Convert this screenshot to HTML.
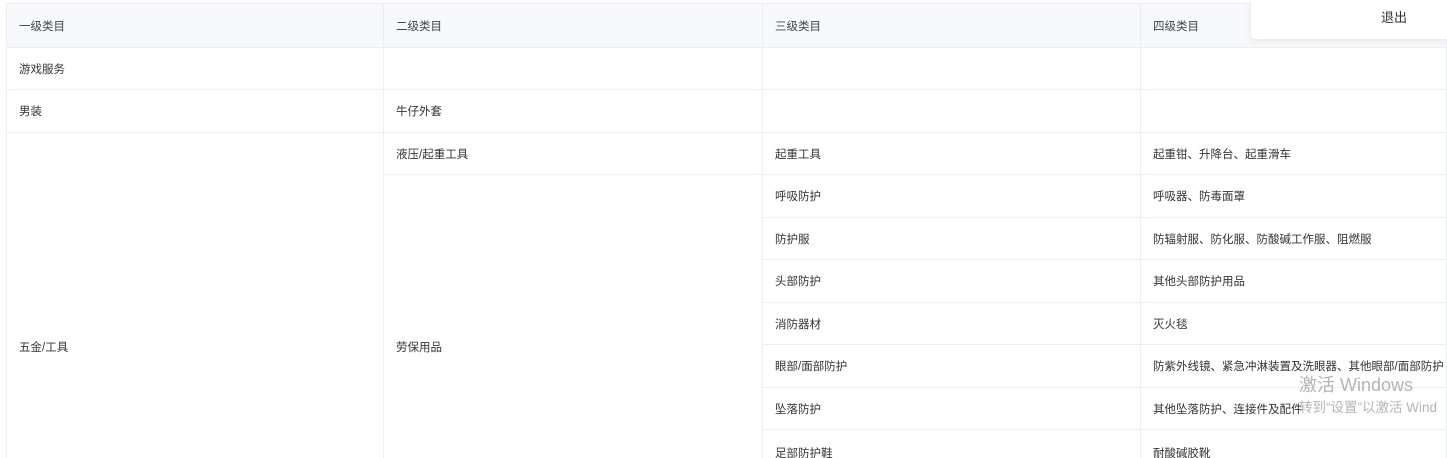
<!DOCTYPE html>
<html style="width:1447px;height:458px;overflow:hidden"><head><meta charset="utf-8"><style>
*{margin:0;padding:0;box-sizing:border-box}
body{width:1447px;height:458px;overflow:hidden;background:#fff;position:relative;font-family:"Liberation Sans","Noto Sans CJK SC",sans-serif;font-size:11.5px;color:#333}
.c{position:absolute;display:flex;align-items:center;padding-left:12px;border-right:1px solid #ebeef5;border-bottom:1px solid #ebeef5;white-space:nowrap;overflow:hidden}
.h{background:#f8f9fb;color:#444}
.pop{position:absolute;left:1251px;top:0;width:196px;height:39px;background:#fff;border-radius:0 0 0 4px;box-shadow:0 2px 8px rgba(0,0,0,.08)}
.pop span{position:absolute;left:130px;top:7px;font-size:13px;color:#333}
.wm1{position:absolute;left:1299px;top:371px;font-size:18px;color:#b5b5b5}
.wm2{position:absolute;left:1299px;top:396px;font-size:13.5px;color:#b5b5b5;white-space:nowrap}
</style></head><body>
<div style="position:absolute;left:0;top:0;width:1447px;height:458px;overflow:hidden">
<div style="position:absolute;left:6px;top:3px;width:1441px;height:1px;background:#ebeef5"></div>
<div style="position:absolute;left:6px;top:3px;width:1px;height:455px;background:#ebeef5"></div>
<div class="c h" style="left:7px;top:4px;width:377px;height:44px">一级类目</div>
<div class="c h" style="left:384px;top:4px;width:379px;height:44px">二级类目</div>
<div class="c h" style="left:763px;top:4px;width:378px;height:44px">三级类目</div>
<div class="c h" style="left:1141px;top:4px;width:306px;height:44px">四级类目</div>
<div class="c" style="left:7px;top:48px;width:377px;height:42px">游戏服务</div>
<div class="c" style="left:384px;top:48px;width:379px;height:42px"></div>
<div class="c" style="left:763px;top:48px;width:378px;height:42px"></div>
<div class="c" style="left:1141px;top:48px;width:306px;height:42px"></div>
<div class="c" style="left:7px;top:90px;width:377px;height:43px">男装</div>
<div class="c" style="left:384px;top:90px;width:379px;height:43px">牛仔外套</div>
<div class="c" style="left:763px;top:90px;width:378px;height:43px"></div>
<div class="c" style="left:1141px;top:90px;width:306px;height:43px"></div>
<div class="c" style="left:7px;top:133px;width:377px;height:428px">五金/工具</div>
<div class="c" style="left:384px;top:133px;width:379px;height:42px">液压/起重工具</div>
<div class="c" style="left:384px;top:175px;width:379px;height:344px">劳保用品</div>
<div class="c" style="left:763px;top:133px;width:378px;height:42px">起重工具</div>
<div class="c" style="left:1141px;top:133px;width:306px;height:42px">起重钳、升降台、起重滑车</div>
<div class="c" style="left:763px;top:175px;width:378px;height:43px">呼吸防护</div>
<div class="c" style="left:1141px;top:175px;width:306px;height:43px">呼吸器、防毒面罩</div>
<div class="c" style="left:763px;top:218px;width:378px;height:42px">防护服</div>
<div class="c" style="left:1141px;top:218px;width:306px;height:42px">防辐射服、防化服、防酸碱工作服、阻燃服</div>
<div class="c" style="left:763px;top:260px;width:378px;height:43px">头部防护</div>
<div class="c" style="left:1141px;top:260px;width:306px;height:43px">其他头部防护用品</div>
<div class="c" style="left:763px;top:303px;width:378px;height:42px">消防器材</div>
<div class="c" style="left:1141px;top:303px;width:306px;height:42px">灭火毯</div>
<div class="c" style="left:763px;top:345px;width:378px;height:43px">眼部/面部防护</div>
<div class="c" style="left:1141px;top:345px;width:306px;height:43px">防紫外线镜、紧急冲淋装置及洗眼器、其他眼部/面部防护</div>
<div class="c" style="left:763px;top:388px;width:378px;height:42px">坠落防护</div>
<div class="c" style="left:1141px;top:388px;width:306px;height:42px">其他坠落防护、连接件及配件</div>
<div class="c" style="left:763px;top:430px;width:378px;height:28px;align-items:flex-start;padding-top:15px;border-bottom:none">足部防护鞋</div>
<div class="c" style="left:1141px;top:430px;width:306px;height:28px;align-items:flex-start;padding-top:15px;border-bottom:none">耐酸碱胶靴</div>
<div class="pop"><span>退出</span></div>
<div class="wm1">激活 Windows</div>
<div class="wm2">转到“设置”以激活 Wind</div>
</div>
</body></html>
